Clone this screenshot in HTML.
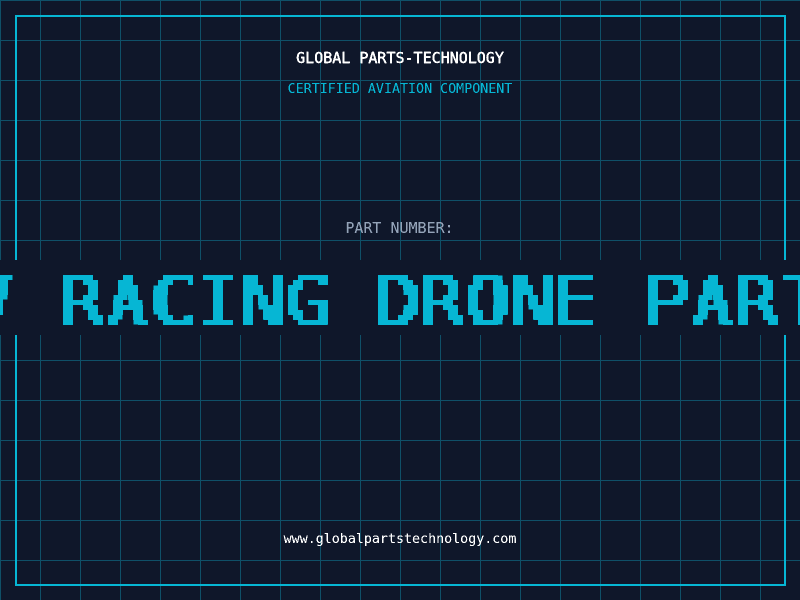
<!DOCTYPE html>
<html lang="en">
<head>
<meta charset="utf-8">
<title>Global Parts-Technology</title>
<style>
html,body{margin:0;padding:0;width:800px;height:600px;overflow:hidden;background:#0f172a}
svg{display:block}
text{font-family:"DejaVu Sans Mono","Liberation Mono",monospace;white-space:pre}
</style>
</head>
<body>
<svg width="800" height="600" viewBox="0 0 800 600" xmlns="http://www.w3.org/2000/svg">
<defs>
<pattern id="g" width="40" height="40" patternUnits="userSpaceOnUse">
<rect width="40" height="1" fill="#0f5068"/>
<rect width="1" height="40" fill="#0f5068"/>
</pattern>
<filter id="pix" filterUnits="userSpaceOnUse" primitiveUnits="userSpaceOnUse" x="-2" y="260" width="810" height="75" color-interpolation-filters="sRGB">
<feMorphology in="SourceGraphic" operator="dilate" radius="2 0" result="w"/>
<feFlood x="0" y="262" width="1" height="1" flood-color="#000" result="d"/>
<feComposite in="d" in2="d" operator="over" x="-2" y="260" width="5" height="5" result="c"/>
<feTile in="c" x="-2" y="260" width="810" height="75" result="t"/>
<feComposite in="w" in2="t" operator="in" result="s"/>
<feComponentTransfer in="s" result="h"><feFuncA type="linear" slope="100" intercept="-40"/></feComponentTransfer>
<feMorphology in="h" operator="dilate" radius="2" result="m"/>
<feFlood flood-color="#06b6d4" result="col"/>
<feComposite in="col" in2="m" operator="in"/>
</filter>
<filter id="crisp" x="-5%" y="-30%" width="110%" height="160%" color-interpolation-filters="sRGB">
<feComponentTransfer><feFuncA type="linear" slope="3" intercept="-0.8"/></feComponentTransfer>
</filter>
</defs>
<rect width="800" height="600" fill="#0f172a"/>
<rect width="800" height="600" fill="url(#g)"/>
<rect x="16" y="16" width="769" height="569" fill="none" stroke="#06b6d4" stroke-width="2"/>
<text x="400" y="63" text-anchor="middle" font-size="15" fill="#ffffff" stroke="#ffffff" stroke-width="0.4" filter="url(#crisp)">GLOBAL PARTS-TECHNOLOGY</text>
<text x="400" y="93" text-anchor="middle" font-size="13.33" fill="#06b6d4" filter="url(#crisp)">CERTIFIED AVIATION COMPONENT</text>
<text x="399.5" y="233" text-anchor="middle" font-size="15" fill="#94a3b8" filter="url(#crisp)">PART NUMBER:</text>
<rect x="0" y="260" width="800" height="75" fill="#0f172a"/>
<g filter="url(#pix)" font-size="68.6" fill="#06b6d4">
<text transform="matrix(1,0,0,1,-117,0)" y="325">F</text>
<text transform="matrix(1,0,0,1,-72,0)" y="325">P</text>
<text transform="matrix(.89,0,0,1,-26,0)" y="325">V</text>
<text transform="matrix(1.06,0,0,1,59.7,0)" y="325">R</text>
<text transform="matrix(.89,0,0,1,109,0)" y="325">A</text>
<text transform="matrix(1.1,0,0,1,150.6,0)" y="325">C</text>
<text transform="matrix(.935,0,0,1,198.2,0)" y="325">I</text>
<text transform="matrix(1.11,0,0,1,239.5,0)" y="325">N</text>
<text transform="matrix(1.11,0,0,1,285.3,0)" y="325">G</text>
<text transform="matrix(1.125,0,0,1,374.4,0)" y="325">D</text>
<text transform="matrix(1.06,0,0,1,419.7,0)" y="325">R</text>
<text transform="matrix(1.04,0,0,1,466.1,0)" y="325">O</text>
<text transform="matrix(1.11,0,0,1,509.5,0)" y="325">N</text>
<text transform="matrix(1.06,0,0,1,552.4,0)" y="325">E</text>
<text transform="matrix(1.2,0,0,1,641.5,0)" y="325">P</text>
<text transform="matrix(.89,0,0,1,694,0)" y="325">A</text>
<text transform="matrix(1.06,0,0,1,734.7,0)" y="325">R</text>
<text transform="matrix(.88,0,0,1,784.3,0)" y="325">T</text>
<text transform="matrix(1,0,0,1,828,0)" y="325">S</text>
</g>
<text x="400" y="543" text-anchor="middle" font-size="13.33" fill="#ffffff" filter="url(#crisp)">www.globalpartstechnology.com</text>
</svg>
</body>
</html>
